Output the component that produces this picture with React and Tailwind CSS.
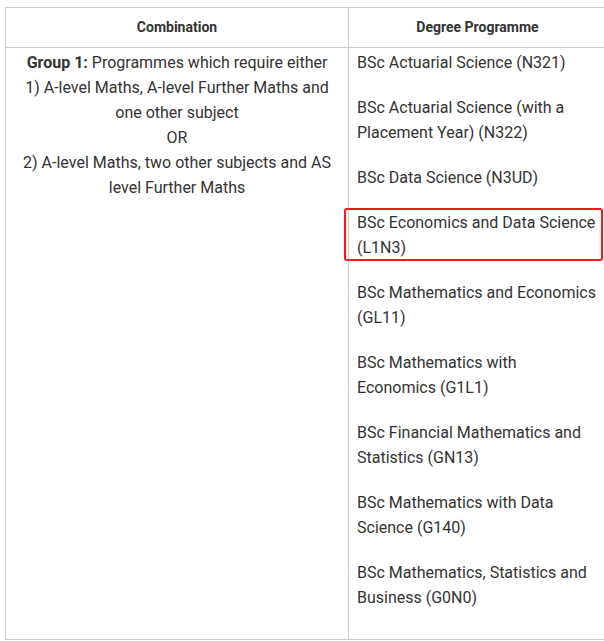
import React from 'react';

const programmes = [
  'BSc Actuarial Science (N321)',
  'BSc Actuarial Science (with a Placement Year) (N322)',
  'BSc Data Science (N3UD)',
  'BSc Economics and Data Science (L1N3)',
  'BSc Mathematics and Economics (GL11)',
  'BSc Mathematics with Economics (G1L1)',
  'BSc Financial Mathematics and Statistics (GN13)',
  'BSc Mathematics with Data Science (G140)',
  'BSc Mathematics, Statistics and Business (G0N0)',
];

// highlighted row in the screenshot
const HIGHLIGHT = 3;

const App = () => {
  return (
    <div className="min-h-screen bg-white pt-[7px] pl-[5px] overflow-hidden" style={{ fontFamily: 'Roboto, "Liberation Sans", sans-serif' }}>
      <table className="w-[610px] min-w-[610px] border-collapse text-[#333] table-fixed">
        <thead>
          <tr>
            <th className="w-[343px] border border-[#cccccc] pt-[7px] pb-2 text-[14px] leading-6 font-bold text-center">Combination</th>
            <th className="border border-[#cccccc] pt-[7px] pb-2 pr-[8px] text-[14px] leading-6 font-bold text-center">Degree Programme</th>
          </tr>
        </thead>
        <tbody>
          <tr>
            <td className="align-top border border-[#cccccc] px-2 pt-[2px] pb-[9px] text-[16px] leading-[25px] text-center">
              <strong>Group 1:</strong> Programmes which require either
              <br />
              1) A-level Maths, A-level Further Maths and one other subject
              <br />
              OR
              <br />
              2) A-level Maths, two other subjects and AS level Further Maths
            </td>
            <td className="align-top border border-[#cccccc] pl-2 pr-4 pt-[2px] pb-[9px] text-[16px] leading-[25px]">
              {programmes.map((p, i) => (
                <p key={p} className="relative mb-5">
                  {p}
                  {i === HIGHLIGHT && (
                    <span className="absolute -left-[13px] -top-[2px] -right-[5px] -bottom-[1px] border-2 border-[#f01c1c] rounded-[3px]" />
                  )}
                </p>
              ))}
            </td>
          </tr>
        </tbody>
      </table>
    </div>
  );
};

export default App;
